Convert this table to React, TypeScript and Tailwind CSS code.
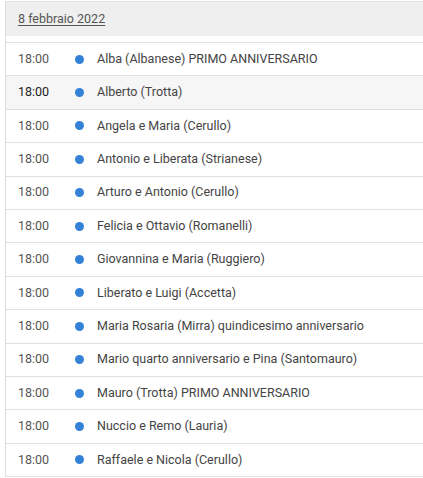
const items = [
  'Alba (Albanese) PRIMO ANNIVERSARIO',
  'Alberto (Trotta)',
  'Angela e Maria (Cerullo)',
  'Antonio e Liberata (Strianese)',
  'Arturo e Antonio (Cerullo)',
  'Felicia e Ottavio (Romanelli)',
  'Giovannina e Maria (Ruggiero)',
  'Liberato e Luigi (Accetta)',
  'Maria Rosaria (Mirra) quindicesimo anniversario',
  'Mario quarto anniversario e Pina (Santomauro)',
  'Mauro (Trotta) PRIMO ANNIVERSARIO',
  'Nuccio e Remo (Lauria)',
  'Raffaele e Nicola (Cerullo)',
];

export default function App() {
  return (
    <div className="h-[478px] w-[423px] overflow-hidden bg-white pl-[5px] pt-px font-['Roboto',sans-serif] text-[12.5px]">
      <div className="w-[430px] border-l border-[#dedede]">
        <div className="flex h-[35px] items-center border-t border-[#e2e2e2] bg-[#efefef] pl-3 pt-px">
          <span className="text-[#555] underline underline-offset-2">8 febbraio 2022</span>
        </div>
        <div className="h-[6px]" />
        <ul className="border-t border-[#e0e0e0]">
          {items.map((name, i) => (
            <li
              key={name}
              className={
                'flex h-[33.4px] items-center border-b border-[#e0e0e0] pl-3 ' +
                (i === 1 ? 'bg-[#f6f6f6]' : '')
              }
            >
              <span className={'w-[57px] ' + (i === 1 ? 'text-[#222]' : 'text-[#555]')}>18:00</span>
              <span className="h-[9px] w-[9px] rounded-full bg-[#3382d8]" />
              <span className="ml-[13px] text-[#444]">{name}</span>
            </li>
          ))}
        </ul>
      </div>
    </div>
  );
}
